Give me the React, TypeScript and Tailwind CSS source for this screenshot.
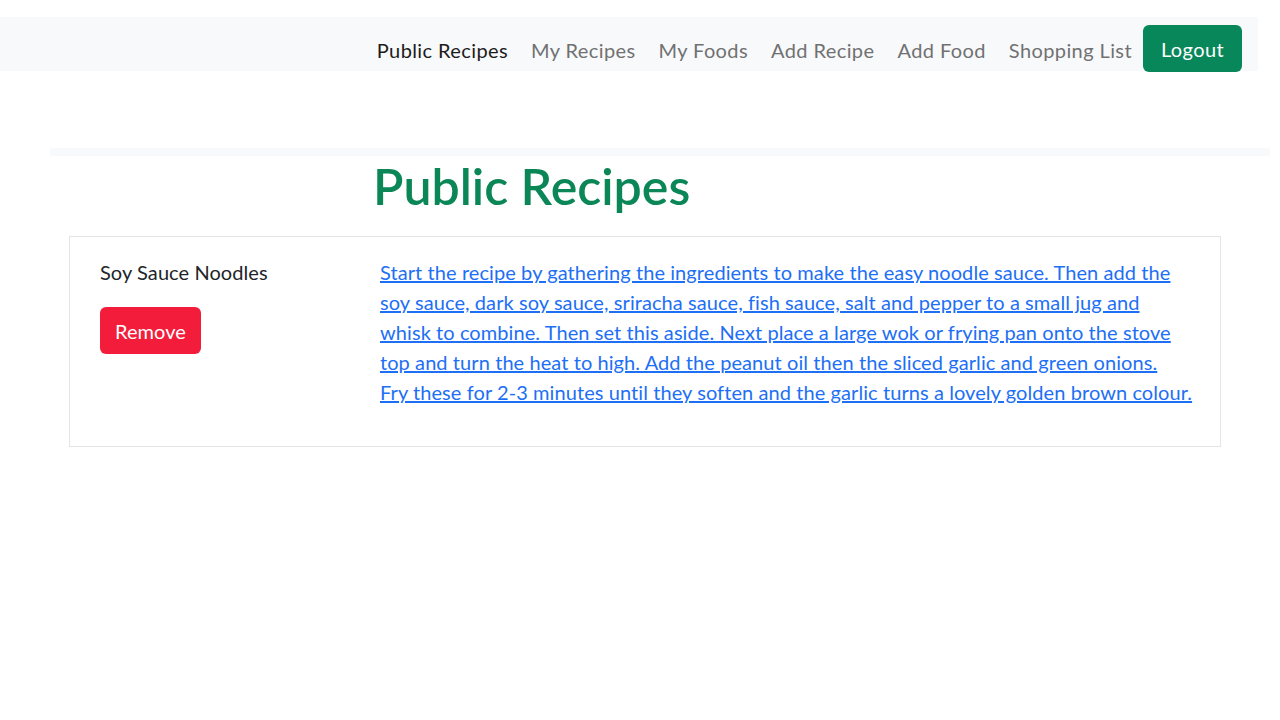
const links = ["My Recipes", "My Foods", "Add Recipe", "Add Food", "Shopping List"];

const recipe = {
  name: "Soy Sauce Noodles",
  method: [
    "Start the recipe by gathering the ingredients to make the easy noodle sauce. Then add the",
    "soy sauce, dark soy sauce, sriracha sauce, fish sauce, salt and pepper to a small jug and",
    "whisk to combine. Then set this aside. Next place a large wok or frying pan onto the stove",
    "top and turn the heat to high. Add the peanut oil then the sliced garlic and green onions.",
    "Fry these for 2-3 minutes until they soften and the garlic turns a lovely golden brown colour.",
  ],
};

export default function App() {
  return (
    <div className="min-h-screen bg-white pt-[17px] font-['Lato',sans-serif] text-[20px] leading-[30px] tracking-[0.08px] text-[#212529]">
      <nav className="mr-[22px] flex h-[54px] items-start justify-end bg-[#f8f9fa] pr-[16px] tracking-[0.02em]">
        <div className="flex items-center gap-[23px] pt-[8px]">
          <a className="pt-[2px] text-[#1c1c1c]">Public Recipes</a>
          {links.map((l) => (
            <a key={l} className="pt-[2px] text-[#707172]">
              {l}
            </a>
          ))}
          <button className="-ml-[12px] h-[47px] w-[99px] rounded-[6px] bg-[#07875a] pt-[1px] text-white">
            Logout
          </button>
        </div>
      </nav>

      <div className="ml-[50px] mr-[10px] mt-[77px] h-[8px] bg-[#f8f9fa]" />

      <h1 className="pl-[373px] text-[50px] font-semibold leading-[60px] tracking-normal text-[#0b8757]">
        Public Recipes
      </h1>

      <div className="mx-[69px] mt-[20px] w-[1152px] border border-[#e3e5e8] pb-[39px] pl-[30px] pt-[20px]">
        <div className="flex">
          <div className="w-[280px] shrink-0">
            <p>{recipe.name}</p>
            <button className="mt-[20px] h-[47px] w-[101px] rounded-[6px] bg-[#f41c3b] text-white">
              Remove
            </button>
          </div>
          <a href="#" className="w-[830px] text-[#1d6ff5] underline">
            {recipe.method.map((line, i) => (
              <span key={i}>
                {line}
                {i < recipe.method.length - 1 ? <br /> : null}
              </span>
            ))}
          </a>
        </div>
      </div>
    </div>
  );
}
